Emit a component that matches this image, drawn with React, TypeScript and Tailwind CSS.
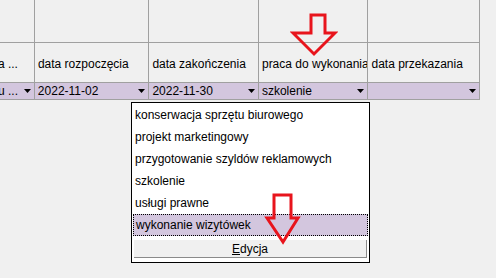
import React from 'react';

const items = [
    'konserwacja sprzętu biurowego',
    'projekt marketingowy',
    'przygotowanie szyldów reklamowych',
    'szkolenie',
    'usługi prawne',
    'wykonanie wizytówek',
];

function Caret() {
    return (
        <svg width="7" height="4" viewBox="0 0 7 4" className="shrink-0">
            <path d="M0 0 H7 L3.5 4 Z" fill="#000"/>
        </svg>
    );
}

const cols = ['w-[35px]', 'w-[115px]', 'w-[110px]', 'w-[110px]', 'w-[111px]'];
const headers = ['a ...', 'data rozpoczęcia', 'data zakończenia', 'praca do wykonania', 'data przekazania'];
const values = ['u ...', '2022-11-02', '2022-11-30', 'szkolenie', ''];

export default function App() {
    return (
        <div className="relative w-[496px] h-[278px] bg-[#f0f0f0] overflow-hidden text-[12px] text-black"
             style={{fontFamily: '"Liberation Sans", Arial, sans-serif'}}>
            <div className="flex flex-col w-[480px] border-r border-[#a0a0a0]">
                <div className="flex h-[43px] border-b border-[#a0a0a0]">
                    {cols.map((c, i) => (
                        <div key={i} className={`${c} h-full ${i < 4 ? 'border-r border-[#a0a0a0]' : ''}`}/>
                    ))}
                </div>
                <div className="flex h-[40px] border-b border-[#a0a0a0]">
                    {cols.map((c, i) => (
                        <div key={i}
                             className={`${c} h-full flex items-center pt-[2px] overflow-hidden whitespace-nowrap ${i === 0 ? 'justify-end pr-[16px]' : 'pl-[3px]'} ${i < 4 ? 'border-r border-[#a0a0a0]' : ''}`}>
                            {headers[i]}
                        </div>
                    ))}
                </div>
                <div className="flex h-[17px] bg-[#d3c6de] border-b border-[#a0a0a0]">
                    {cols.map((c, i) => (
                        <div key={i}
                             className={`${c} h-full flex items-center justify-between pr-[3px] overflow-hidden whitespace-nowrap ${i === 0 ? 'pl-0' : 'pl-[3px]'} ${i < 4 ? 'border-r border-[#a0a0a0]' : ''}`}>
                            <span className={i === 0 ? 'ml-[-2px]' : ''}>{values[i]}</span>
                            <Caret/>
                        </div>
                    ))}
                </div>
            </div>

            <div className="absolute left-[131px] top-[102px] w-[239px] h-[161px] bg-white border border-black pt-[1px] px-[1px] flex flex-col">
                {items.map((it, i) => (
                    <div key={it}
                         className={`h-[22px] flex items-center pl-[2px] whitespace-nowrap ${i === items.length - 1 ? 'bg-[#d3c6de] border border-dotted border-black pl-[1px]' : ''}`}>
                        {it}
                    </div>
                ))}
                <div className="mt-[4px] h-[18px] mx-[1px] flex items-center justify-center bg-[#f0f0f0] border-r border-b border-[#8a8a8a]">
                    <span><span className="underline">E</span>dycja</span>
                </div>
            </div>

            <svg width="48" height="46" viewBox="0 0 48 46" className="absolute left-[290px] top-[12px]">
                <path d="M21 3 H35 V21 H45 L24 42 L3 21 H21 Z" fill="none" stroke="#e8141c" strokeWidth="3"/>
            </svg>
            <svg width="38" height="54" viewBox="0 0 38 54" className="absolute left-[264px] top-[192px]">
                <path d="M10 3 H27 V26 H34 L19 50 L3 26 H10 Z" fill="none" stroke="#e8141c" strokeWidth="3"/>
            </svg>
        </div>
    );
}
